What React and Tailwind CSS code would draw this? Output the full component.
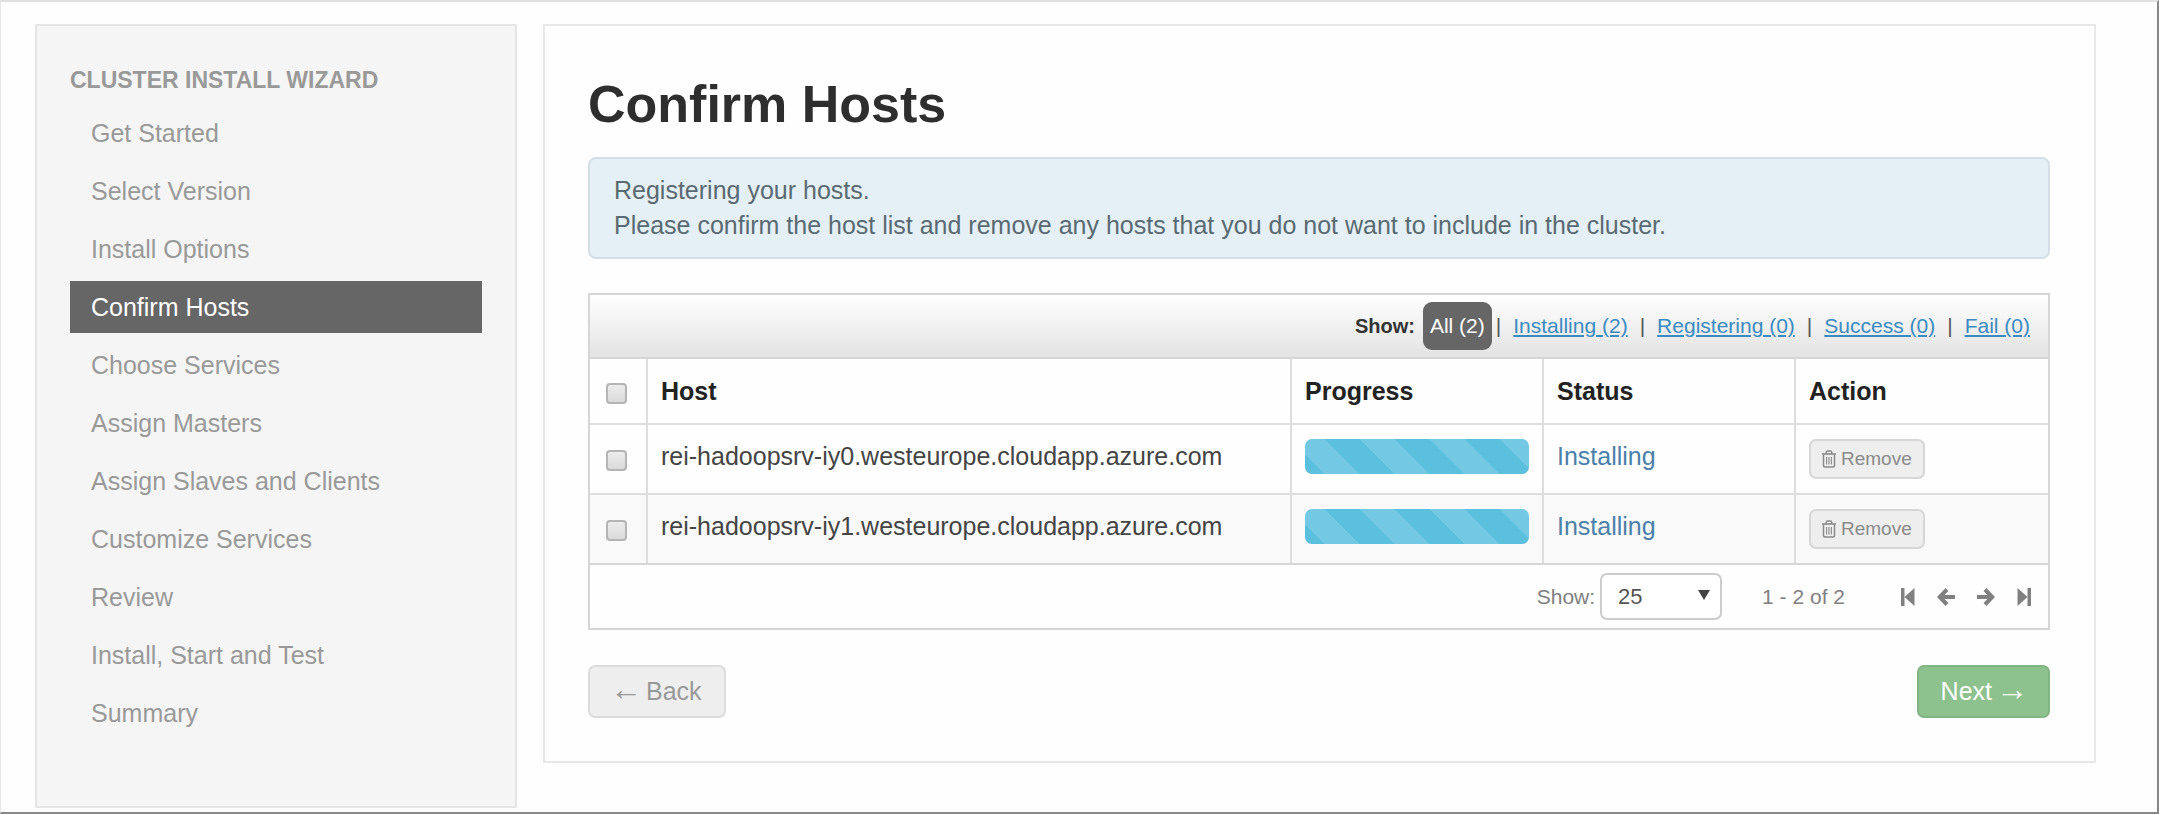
import { useState } from "react";

const steps = [
  "Get Started",
  "Select Version",
  "Install Options",
  "Confirm Hosts",
  "Choose Services",
  "Assign Masters",
  "Assign Slaves and Clients",
  "Customize Services",
  "Review",
  "Install, Start and Test",
  "Summary",
];

const filters = ["Installing (2)", "Registering (0)", "Success (0)", "Fail (0)"];

const hosts = [
  "rei-hadoopsrv-iy0.westeurope.cloudapp.azure.com",
  "rei-hadoopsrv-iy1.westeurope.cloudapp.azure.com",
];

function TrashIcon() {
  return (
    <svg viewBox="0 0 14 18" className="h-[18px] w-[14px]" fill="none" stroke="currentColor" aria-hidden="true">
      <path d="M0 4h14" strokeWidth="1.6" />
      <path d="M4.200 4V2.600Q4.200 1 5.700 1h2.600Q9.800 1 9.800 2.600V4" strokeWidth="1.4" />
      <path d="M1.500 4.500V15.500Q1.500 17 3 17h8Q12.500 17 12.500 15.500V4.500" strokeWidth="1.5" />
      <path d="M4.600 7v7.500M7 7v7.500M9.400 7v7.500" strokeWidth="1.1" />
    </svg>
  );
}

function FirstIcon() {
  return (
    <svg viewBox="0 0 14 18" className="h-[18px] w-[14px]" fill="currentColor" aria-hidden="true">
      <path d="M0 0h3.500v18H0z" />
      <path d="M3.500 9L13.500 0v18z" />
    </svg>
  );
}

function ArrowIcon() {
  return (
    <svg viewBox="0 0 18 18" className="size-[18px]" fill="none" stroke="currentColor" strokeWidth="4" aria-hidden="true">
      <path d="M10 1.500L2.800 9l7.200 7.500M3 9h15" />
    </svg>
  );
}

function Check({ label }) {
  return (
    <input
      type="checkbox"
      aria-label={label}
      className="block size-[21px] appearance-none rounded-[4px] border-2 border-[#b4b4b4] bg-linear-to-b from-[#ececec] to-[#dadada] checked:bg-[#5bc0de] checked:bg-none"
    />
  );
}

export default function App() {
  const [size, setSize] = useState("25");
  const th = "border-l-2 border-[#dedede] px-[13px] text-left font-bold text-[#222]";
  const td = "border-l-2 border-t-2 border-[#dedede] px-[13px] pt-[14px] align-top";
  return (
    <div className="min-h-screen border-t-2 border-r-2 border-b-2 border-l border-t-[#e0e0e0] border-r-[#888] border-b-[#888] border-l-[#e6e6e6] bg-[#fefefe] font-['Liberation_Sans',Arial,sans-serif] text-[25px] leading-[35px] text-[#444]">
      <div className="flex items-start gap-[26px] pt-[22px] pr-[61px] pb-1 pl-[34px]">
        <nav className="w-[482px] shrink-0 border-2 border-[#e6e6e6] bg-[#f5f5f5] px-[33px] pt-9 pb-[67px] text-[#999]">
          <h2 className="text-[23px] leading-9 font-bold">CLUSTER INSTALL WIZARD</h2>
          <ul className="mt-[9px] flex flex-col gap-[6px] leading-9">
            {steps.map((s) => (
              <li key={s}>
                <a
                  href="#"
                  aria-current={s === "Confirm Hosts" ? "step" : undefined}
                  className={
                    s === "Confirm Hosts"
                      ? "block bg-[#666] px-[21px] py-2 text-white"
                      : "block px-[21px] py-2"
                  }
                >
                  {s}
                </a>
              </li>
            ))}
          </ul>
        </nav>

        <main className="min-w-0 grow border-2 border-[#e8e8e8] py-[43px] pr-11 pl-[43px]">
          <h1 className="text-[52px] leading-[70px] font-bold text-[#2e2e2e]">Confirm Hosts</h1>
          <div className="mt-[18px] rounded-lg border-2 border-[#d3dfe4] bg-[#e4f0f6] px-6 py-[14px] text-[#5a6a72]">
            <p>Registering your hosts.</p>
            <p>Please confirm the host list and remove any hosts that you do not want to include in the cluster.</p>
          </div>

          <section className="mt-[34px] border-2 border-[#d6d6d6]">
            <div className="flex h-[62px] items-center justify-end gap-3 bg-linear-to-b from-white to-[#e3e3e3] pr-[18px] text-[21px] leading-[48px] text-[#555]">
              <span className="flex items-center gap-2">
                <span className="text-[20px] font-bold text-[#333]">Show:</span>
                <a href="#" className="rounded-[9px] bg-[#666] px-[7px] text-white">All (2)</a>
                <span className="-ml-1">|</span>
              </span>
              {filters.map((f, i) => (
                <span key={f} className="flex gap-3">
                  {i > 0 && <span>|</span>}
                  <a href="#" className="text-[#3a8bc2] underline">{f}</a>
                </span>
              ))}
            </div>
            <table className="w-full table-fixed border-separate border-spacing-0 border-y-2 border-[#d6d6d6]">
              <colgroup>
                <col className="w-14" />
                <col />
                <col className="w-[252px]" />
                <col className="w-[252px]" />
                <col className="w-[254px]" />
              </colgroup>
              <thead>
                <tr className="h-16">
                  <th className="px-4 pt-1"><Check label="Select all hosts" /></th>
                  <th className={th}>Host</th>
                  <th className={th}>Progress</th>
                  <th className={th}>Status</th>
                  <th className={th}>Action</th>
                </tr>
              </thead>
              <tbody>
                {hosts.map((h) => (
                  <tr key={h} className="h-[70px] even:bg-[#f9f9f9]">
                    <td className="border-t-2 border-[#dedede] px-4 pt-[25px] align-top"><Check label={h} /></td>
                    <td className={td}>{h}</td>
                    <td className={td}>
                      <div
                        role="progressbar"
                        aria-label={h}
                        className="h-[35px] rounded-[7px] bg-[#5bc0de] bg-[linear-gradient(45deg,#ffffff26_25%,transparent_25%,transparent_50%,#ffffff26_50%,#ffffff26_75%,transparent_75%)] bg-size-[70px_70px] bg-[position:-16px_0px]"
                      />
                    </td>
                    <td className={td}><a href="#" className="text-[#4a80aa]">Installing</a></td>
                    <td className={td}>
                      <button className="flex h-10 items-center gap-[5px] rounded-[7px] border-2 border-[#d6d6d6] bg-[#eee] px-[11px] text-[19px] leading-6 text-[#8a8a8a]">
                        <TrashIcon />
                        Remove
                      </button>
                    </td>
                  </tr>
                ))}
              </tbody>
            </table>
            <div className="flex h-[63px] items-center justify-end pr-[17px] text-[21px] text-[#808080]">
              <label htmlFor="page-size" className="mr-[5px]">Show:</label>
              <div className="relative">
                <select
                  id="page-size"
                  value={size}
                  onChange={(e) => setSize(e.target.value)}
                  className="block h-[47px] w-[122px] appearance-none rounded-[7px] border-2 border-[#ccc] bg-white pl-4 text-[22px] text-[#555]"
                >
                  <option>10</option>
                  <option>25</option>
                  <option>50</option>
                </select>
                <svg viewBox="0 0 12 10" className="pointer-events-none absolute top-[17px] right-3 h-[10px] w-3" fill="#444" aria-hidden="true">
                  <path d="M0 0h12L6 10z" />
                </svg>
              </div>
              <span className="mr-14 ml-10">1 - 2 of 2</span>
              <div className="flex gap-[22px]">
                <button aria-label="First page"><FirstIcon /></button>
                <button aria-label="Previous page"><ArrowIcon /></button>
                <button aria-label="Next page" className="rotate-180"><ArrowIcon /></button>
                <button aria-label="Last page" className="rotate-180"><FirstIcon /></button>
              </div>
            </div>
          </section>

          <div className="mt-[35px] flex justify-between">
            <button className="flex h-[53px] items-center gap-1 rounded-[7px] border-2 border-[#dcdcdc] bg-[#eee] pr-[22px] pl-5 text-[#999]">
              <span className="pb-1 text-[32px]">←</span>
              <span>Back</span>
            </button>
            <button className="flex h-[53px] items-center gap-1 rounded-[7px] border-2 border-[#82b583] bg-[#8dc28e] pr-5 pl-[22px] text-white">
              <span>Next</span>
              <span className="pb-1 text-[32px]">→</span>
            </button>
          </div>
        </main>
      </div>
    </div>
  );
}
